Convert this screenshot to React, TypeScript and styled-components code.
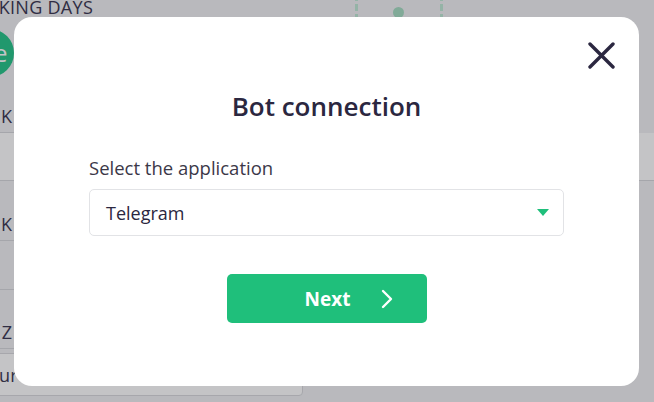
import React from 'react'
import styled, { createGlobalStyle } from 'styled-components'

const GlobalStyle = createGlobalStyle`
  html, body {
    margin: 0;
    padding: 0;
    width: 654px;
    height: 402px;
    overflow: hidden;
    background: #f0f1f3;
    font-family: "Open Sans", "Noto Sans", Arial, sans-serif;
    color: #2b2740;
  }
`;

// ---------- page underneath ----------

const Page = styled.div`
    margin: -6px 0 0 -60px;
    width: 714px;
    display: grid;
    grid-template-columns: 363px 1fr;
    grid-template-rows: 26px 65px 48px 48px 60px 49px 59px 47px;
`;

const HeaderCell = styled.div`
    font-size: 18px;
    line-height: 26px;
    padding-left: 16px;
    letter-spacing: 0.3px;
    color: #3a3650;
    white-space: nowrap;
`;

const Chart = styled.div`
    grid-column: 2;
    grid-row: 1 / 4;
    position: relative;
`;

const DashLine = styled.div<{ $left: number }>`
    position: absolute;
    top: 0;
    left: ${p => p.$left}px;
    width: 3px;
    height: 30px;
    background: repeating-linear-gradient(
        to bottom,
        #bfe9d4 0 7px,
        transparent 7px 10px
    );
`;

const Dot = styled.div`
    position: absolute;
    top: 13px;
    left: 90px;
    width: 11px;
    height: 11px;
    border-radius: 50%;
    background: #a6dcc2;
`;

const AvatarRow = styled.div`
    grid-column: 1;
    display: flex;
    align-items: center;
    padding-left: 26px;
`;

const Avatar = styled.div`
    width: 48px;
    height: 48px;
    border-radius: 50%;
    background: #26c489;
    color: #fff;
    font-size: 24px;
    display: flex;
    align-items: center;
    justify-content: center;
`;

const Row = styled.div<{ $full?: boolean; $light?: boolean; $align?: string }>`
    grid-column: ${p => (p.$full ? '1 / -1' : '1')};
    border-bottom: 1px solid #d6d7db;
    background: ${p => (p.$light ? '#ffffff' : 'transparent')};
    display: flex;
    align-items: ${p => p.$align || 'center'};
`;

const Cell = styled.div`
    width: 72px;
    text-align: right;
    font-size: 18px;
    color: #3a3650;
    white-space: nowrap;
    padding-bottom: 4px;
`;

const InputBox = styled.div`
    grid-column: 1;
    margin-top: 4px;
    border: 1px solid #d8d9dd;
    border-radius: 4px;
    background: #fff;
    display: flex;
    align-items: center;
    padding-left: 34px;
    font-size: 18px;
    color: #3a3650;
`;

// ---------- modal ----------

const Overlay = styled.div`
    position: fixed;
    inset: 0;
    background: rgba(18, 20, 26, 0.25);
    display: flex;
    align-items: flex-start;
    justify-content: flex-start;
    padding: 17px 0 0 14px;
`;

const Modal = styled.div`
    position: relative;
    width: 625px;
    height: 369px;
    box-sizing: border-box;
    background: #fff;
    border-radius: 18px;
    padding: 72px 75px 0;
    display: flex;
    flex-direction: column;
    align-items: stretch;
`;

const CloseButton = styled.button`
    position: absolute;
    top: 23px;
    right: 23px;
    width: 30px;
    height: 30px;
    padding: 0;
    border: none;
    background: none;
    cursor: pointer;
    display: flex;
    align-items: center;
    justify-content: center;
`;

const Title = styled.h2`
    margin: 0;
    text-align: center;
    font-size: 26px;
    line-height: 34px;
    font-weight: 600;
    color: #2b2740;
`;

const Label = styled.label`
    margin-top: 32px;
    font-size: 18.5px;
    line-height: 25px;
    color: #3b3848;
`;

const Select = styled.div`
    margin-top: 9px;
    height: 47px;
    box-sizing: border-box;
    border: 1px solid #e2e3e6;
    border-radius: 5px;
    display: flex;
    align-items: center;
    justify-content: space-between;
    padding: 0 14px 0 16px;
    font-size: 18px;
    color: #2b2740;
`;

const Button = styled.button`
    margin: 38px auto 0;
    width: 200px;
    height: 49px;
    border: none;
    border-radius: 5px;
    background: #1fbf7b;
    color: #fff;
    font-family: inherit;
    font-size: 19px;
    font-weight: 700;
    display: flex;
    align-items: center;
    justify-content: center;
    gap: 31px;
    padding: 0 0 0 45px;
    cursor: pointer;
`;

export default function App() {
    return (
        <>
            <GlobalStyle />
            <Page>
                <HeaderCell>WORKING DAYS</HeaderCell>
                <Chart>
                    <DashLine $left={52} />
                    <Dot />
                    <DashLine $left={137} />
                </Chart>
                <AvatarRow>
                    <Avatar>Me</Avatar>
                </AvatarRow>
                <Row $align="flex-end">
                    <Cell>12 K</Cell>
                </Row>
                <Row $full $light />
                <Row $align="flex-end">
                    <Cell>40 K</Cell>
                </Row>
                <Row />
                <Row $align="flex-end">
                    <Cell>UTC Z</Cell>
                </Row>
                <InputBox>Hour</InputBox>
            </Page>

            <Overlay>
                <Modal>
                    <CloseButton aria-label="Close">
                        <svg width="27" height="27" viewBox="0 0 27 27">
                            <path d="M2 2 L25 25 M25 2 L2 25" stroke="#2b2740" strokeWidth="3.4" strokeLinecap="round" />
                        </svg>
                    </CloseButton>
                    <Title>Bot connection</Title>
                    <Label>Select the application</Label>
                    <Select>
                        <span>Telegram</span>
                        <svg width="12" height="7" viewBox="0 0 12 7">
                            <path d="M0 0 H12 L6 7 Z" fill="#1fbf7b" />
                        </svg>
                    </Select>
                    <Button>
                        <span>Next</span>
                        <svg width="12" height="20" viewBox="0 0 12 20">
                            <path d="M2 2 L10 10 L2 18" stroke="#fff" strokeWidth="2.4" fill="none" strokeLinecap="round" strokeLinejoin="round" />
                        </svg>
                    </Button>
                </Modal>
            </Overlay>
        </>
    )
}
